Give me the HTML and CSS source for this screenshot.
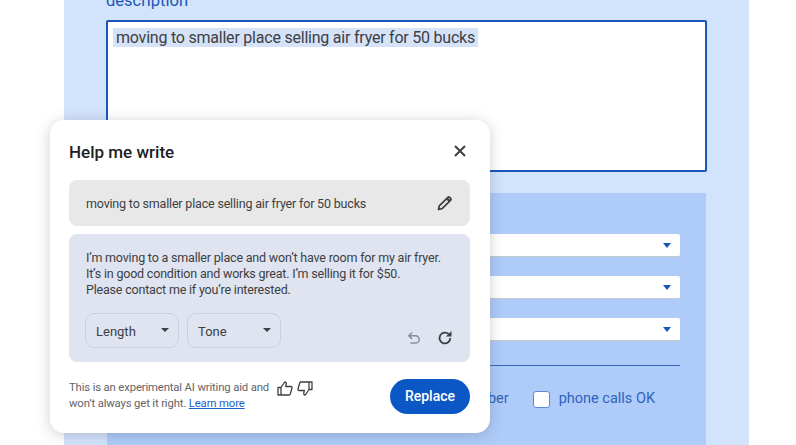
FILE: index.html
```html
<!DOCTYPE html>
<html>
<head>
	<meta charset="UTF-8">
	<meta name="viewport" content="width=device-width, initial-scale=1.0">
	<title>Help me write</title>
	<link rel="stylesheet" href="styles.css">
</head>
<body>
	<div class="page">
		<div class="label">description</div>
		<div class="textarea"><span class="selected">moving to smaller place selling air fryer for 50 bucks</span></div>
		<div class="details">
			<div class="select"><span class="arrow"></span></div>
			<div class="select"><span class="arrow"></span></div>
			<div class="select"><span class="arrow"></span></div>
			<div class="rule"></div>
			<div class="contact">
				<span>phone number</span>
				<span class="check"></span>
				<span class="contact-label">phone calls OK</span>
			</div>
		</div>
	</div>

	<div class="dialog">
		<div class="dialog-head">
			<div class="dialog-title">Help me write</div>
			<svg class="close" width="14" height="14" viewBox="0 0 14 14"><path d="M2 2l10 10M12 2L2 12" stroke="#3c4043" stroke-width="2" fill="none"/></svg>
		</div>
		<div class="prompt">
			<span>moving to smaller place selling air fryer for 50 bucks</span>
			<svg width="18" height="18" viewBox="0 0 18 18"><path d="M2.500 15.500l.8-3.600 8.600-8.600a1.200 1.200 0 0 1 1.700 0l1.100 1.100a1.200 1.200 0 0 1 0 1.700l-8.600 8.600z" stroke="#3c4043" stroke-width="1.700" fill="none" stroke-linejoin="round"/><path d="M11 4.500l2.800 2.800" stroke="#3c4043" stroke-width="2.400"/></svg>
		</div>
		<div class="result">
			<p>I’m moving to a smaller place and won’t have room for my air fryer.<br>It’s in good condition and works great. I’m selling it for $50.<br>Please contact me if you’re interested.</p>
			<div class="controls">
				<div class="pick">Length<span class="caret"></span></div>
				<div class="pick">Tone<span class="caret"></span></div>
				<div class="history">
					<svg width="14" height="14" viewBox="0 0 14 14"><path d="M5 1.500L1.800 4.700 5 7.900M2 4.700h6.500a3.700 3.700 0 0 1 0 7.400H3.500" stroke="#8a8f96" stroke-width="1.500" fill="none"/></svg>
					<svg width="16" height="16" viewBox="0 0 16 16"><path d="M13.300 8a5.400 5.400 0 1 1-1.600-3.800" stroke="#3c4043" stroke-width="1.800" fill="none"/><path d="M14.500 1v5.500H9z" fill="#3c4043"/></svg>
				</div>
			</div>
		</div>
		<div class="dialog-foot">
			<div class="disclaimer">This is an experimental AI writing aid and<br>won’t always get it right. <a href="#">Learn more</a></div>
			<div class="thumbs">
				<svg width="16" height="15" viewBox="0 0 16 15"><path d="M1 6.500h3v7.500H1zM4 6.500L7.700 1c1.300 0 1.800 1 1.500 2.200L8.700 5.500h5.200c.8 0 1.300.8 1.100 1.500l-1.700 6c-.2.600-.7 1-1.300 1H4" stroke="#3c4043" stroke-width="1.300" fill="none" stroke-linejoin="round"/></svg>
				<svg width="16" height="15" viewBox="0 0 16 15"><path d="M15 8.500h-3V1h3zM12 8.500L8.300 14c-1.300 0-1.800-1-1.500-2.200l.5-2.300H2.100c-.8 0-1.300-.8-1.100-1.500l1.700-6C2.900 1.400 3.400 1 4 1h8" stroke="#3c4043" stroke-width="1.300" fill="none" stroke-linejoin="round"/></svg>
			</div>
			<div class="replace">Replace</div>
		</div>
	</div>
</body>
</html>
```

FILE: styles.css
```css
* {
	box-sizing: border-box;
}
html, body {
	margin: 0;
	height: 445px;
	overflow: hidden;
	background: #fff;
	font-family: Roboto, "Open Sans", sans-serif;
}
.page {
	margin-left: 64px;
	width: 685px;
	height: 445px;
	padding: 0 42px;
	background: #d2e3fc;
	overflow: hidden;
}
.label {
	height: 20px;
	margin-top: -9px;
	margin-bottom: 9px;
	font-size: 16.500px;
	line-height: 20px;
	color: #1a56b8;
}
.textarea {
	height: 152px;
	width: 601px;
	padding: 6px 5px;
	background: #fff;
	border: 2px solid #1a56b8;
	border-radius: 2px;
}
.selected {
	display: inline-block;
	padding: 0 3px;
	background: #d6e2f8;
	font-size: 16px;
	letter-spacing: -0.220px;
	line-height: 19px;
	color: #3c4043;
}
.details {
	width: 599px;
	height: 263px;
	margin: 21px 0 0 1px;
	padding: 41px 26px 0;
	background: #aecbf9;
	border-radius: 0 0 8px 8px;
}
.select {
	display: flex;
	align-items: center;
	justify-content: flex-end;
	height: 23px;
	margin-bottom: 19px;
	padding-right: 9px;
	background: #fff;
	border: 1px solid #c4c7cc;
	border-width: 0 0 1px;
	border-radius: 2px;
}
.arrow {
	border: 4px solid transparent;
	border-top: 5px solid #1a56b8;
	border-bottom: 0;
}
.rule {
	height: 1px;
	margin-top: 24px;
	background: #3568bd;
}
.contact {
	display: flex;
	align-items: center;
	justify-content: flex-end;
	margin-top: 24px;
	padding-right: 25px;
	font-size: 14.500px;
	line-height: 18px;
	color: #2f63bd;
}
.check {
	width: 17px;
	height: 17px;
	margin: 0 9px 0 24px;
	background: #fff;
	border: 1px solid #5f8ad2;
	border-radius: 3px;
}
.dialog {
	position: absolute;
	left: 50px;
	top: 120px;
	width: 440px;
	height: 313px;
	padding: 0 20px 0 19px;
	background: #fff;
	border-radius: 14px;
	box-shadow: 0 2px 14px rgba(60, 64, 67, 0.25);
}
.dialog-head {
	display: flex;
	align-items: center;
	justify-content: space-between;
	height: 60px;
	padding: 2px 3px 0 0;
}
.dialog-title {
	margin-top: 1px;
	font-size: 17px;
	font-weight: 500;
	color: #202124;
}
.prompt {
	display: flex;
	align-items: center;
	justify-content: space-between;
	height: 46px;
	padding: 0 16px 0 17px;
	background: #e8e8e8;
	border-radius: 8px;
	font-size: 12.500px;
	letter-spacing: -0.180px;
	color: #3c4043;
}
.result {
	height: 128px;
	margin-top: 8px;
	padding: 16px 17px 0 16px;
	background: #dfe4f0;
	border-radius: 8px;
}
.result p {
	margin: 0 0 0 1px;
	font-size: 12.500px;
	letter-spacing: -0.190px;
	line-height: 16px;
	color: #3c4043;
}
.controls {
	display: flex;
	gap: 8px;
	margin-top: 15px;
}
.pick {
	position: relative;
	width: 94px;
	height: 35px;
	padding-left: 10px;
	border: 1px solid #cdd0d6;
	border-radius: 9px;
	font-size: 13px;
	line-height: 35px;
	color: #3c4043;
}
.caret {
	position: absolute;
	right: 9px;
	top: 14px;
	border: 4px solid transparent;
	border-top: 4px solid #3c4043;
	border-bottom: 0;
}
.history {
	display: flex;
	align-items: center;
	gap: 16px;
	margin: 14px 0 0 auto;
}
.dialog-foot {
	display: flex;
	align-items: center;
	height: 68px;
}
.disclaimer {
	font-size: 11.300px;
	letter-spacing: -0.140px;
	line-height: 16px;
	color: #5f6368;
	white-space: nowrap;
}
.disclaimer a {
	color: #1a5fc8;
}
.thumbs {
	display: flex;
	gap: 4px;
	margin: -16px 0 0 8px;
}
.replace {
	width: 80px;
	height: 35px;
	margin-left: auto;
	border-radius: 18px;
	background: #0b57c6;
	color: #fff;
	font-size: 14px;
	font-weight: 500;
	line-height: 35px;
	text-align: center;
}
```
